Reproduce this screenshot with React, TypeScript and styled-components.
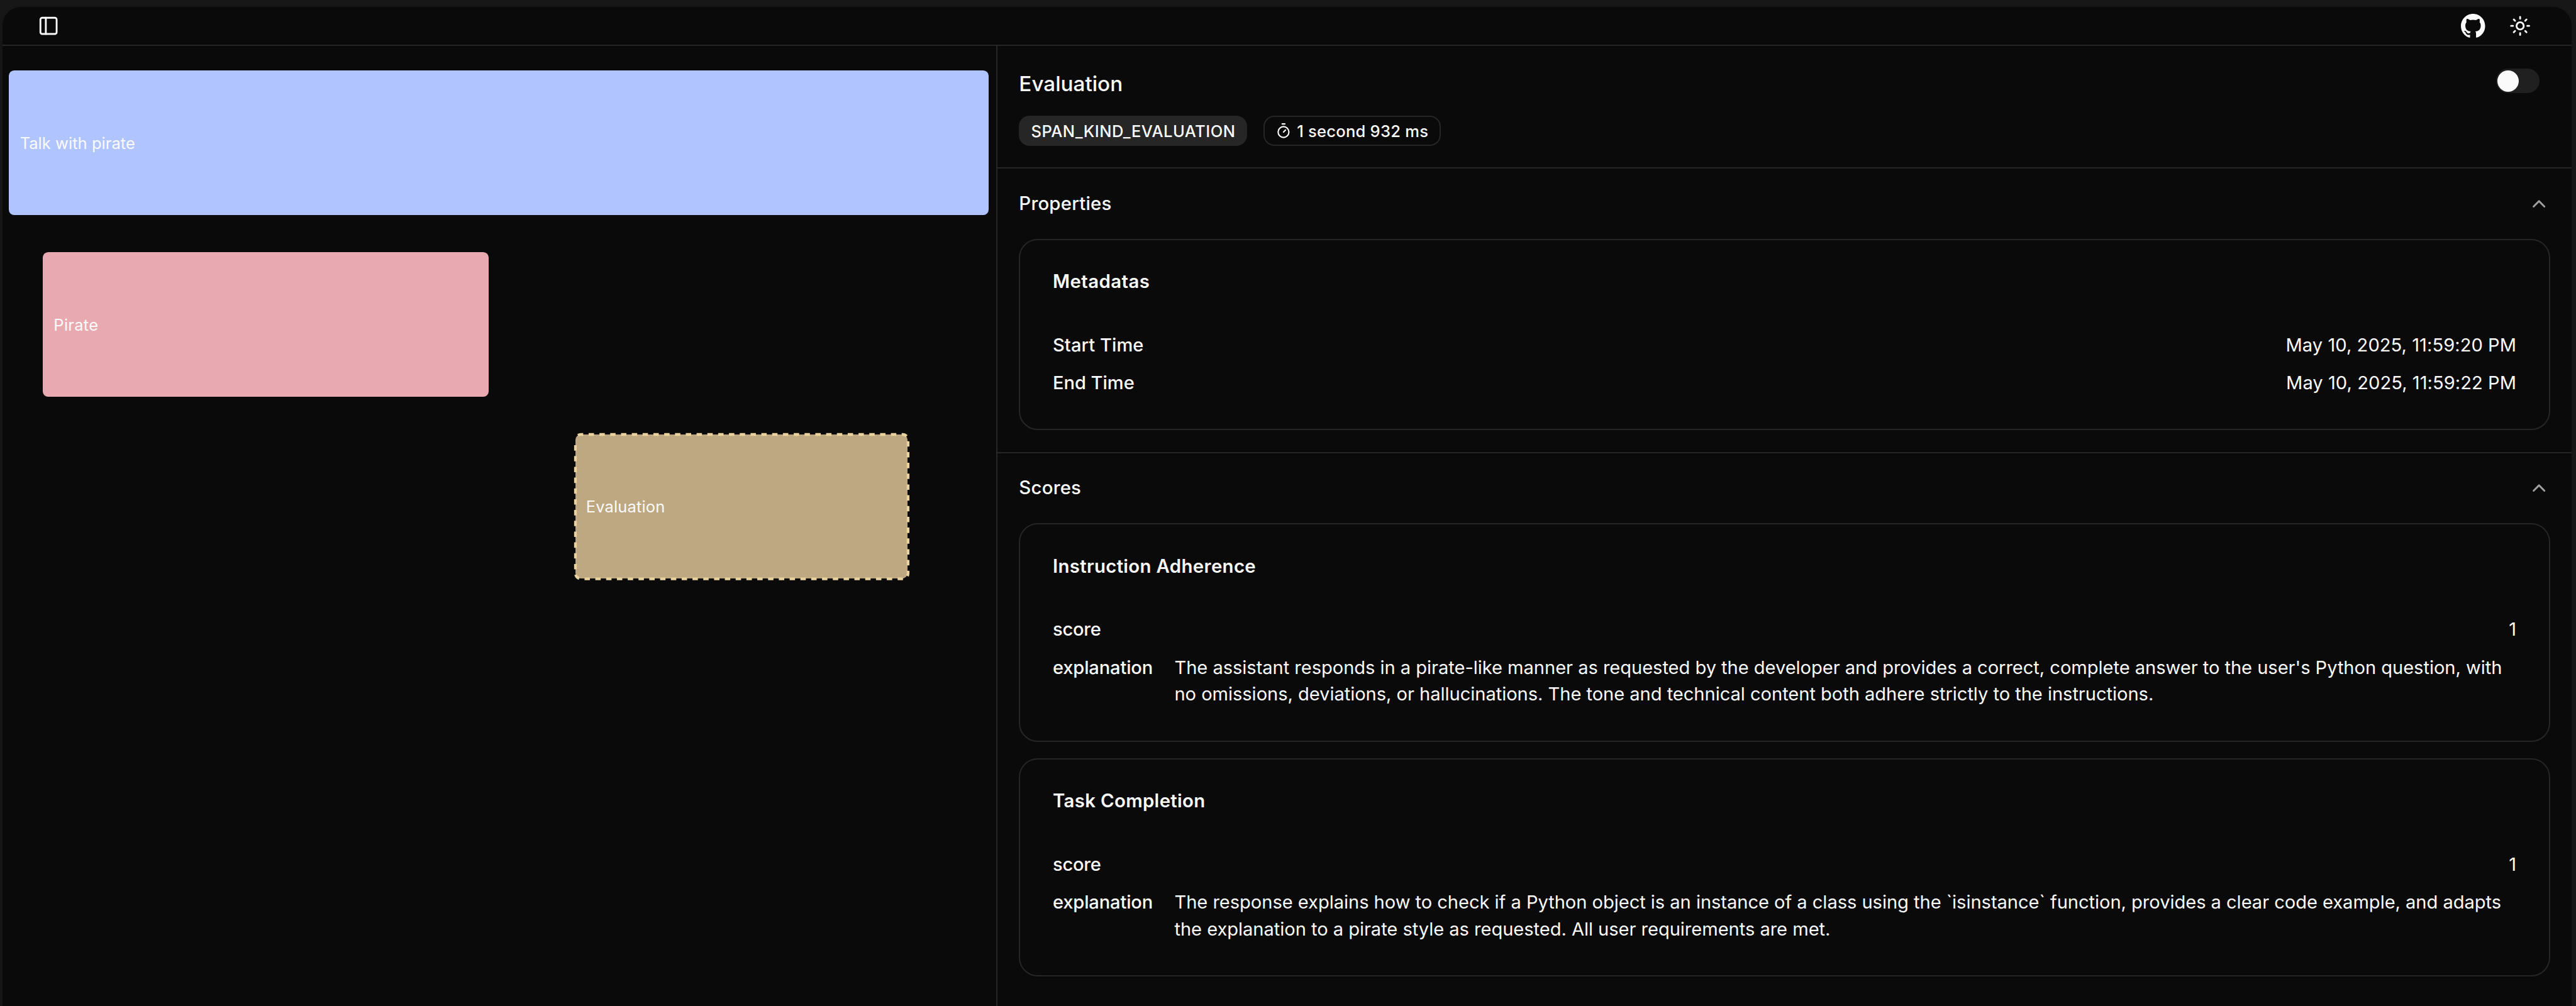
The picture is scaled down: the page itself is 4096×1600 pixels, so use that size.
import React from 'react';
import styled, { createGlobalStyle } from 'styled-components';
import { ChevronUp, PanelLeft, Sun, Timer } from 'lucide-react';

/* One design unit (1 css px of the app at its native zoom) in window pixels. */
const UNIT = (4096 / 7636) * 4;
const px = (n: number) => n * UNIT;
const u = (n: number) => `${px(n).toFixed(3)}px`;
/* Borders always land on two device pixels; paddings next to them make up the rest. */
const LINE = 2;

const color = {
  backdrop: '#171717',
  panel: '#0a0a0a',
  border: '#262626',
  text: '#fafafa',
  muted: '#a1a1a1',
  track: '#202020',
  selection: '#e9d29d',
};

const GlobalStyle = createGlobalStyle`
  *, *::before, *::after { box-sizing: border-box; }
  html, body { margin: 0; background: ${color.backdrop}; }
  body {
    overflow: hidden;
    font-family: Inter, "Liberation Sans", sans-serif;
    color: ${color.text};
    -webkit-font-smoothing: antialiased;
  }
  svg { display: block; flex-shrink: 0; }
`;

const Screen = styled.div`
  height: 100vh;
  padding: ${u(5)} ${u(3.25)} 0 ${u(1.75)};
  overflow: hidden;
  background: ${color.backdrop};
`;

const Panel = styled.main`
  display: flex;
  flex-direction: column;
  height: 110vh;
  border-radius: ${u(14)};
  background: ${color.panel};
  box-shadow: 0 ${u(1)} ${u(3)} rgba(0, 0, 0, 0.1), 0 ${u(1)} ${u(2)} ${u(-1)} rgba(0, 0, 0, 0.1);
`;

const TopBar = styled.header`
  display: flex;
  align-items: center;
  justify-content: space-between;
  flex: none;
  height: ${u(29)};
  padding: 0 ${u(30)} 0 ${u(26)};
  border-bottom: ${LINE}px solid ${color.border};
`;

const Actions = styled.div`
  display: flex;
  align-items: center;
  gap: ${u(18)};
`;

const Body = styled.div`
  display: grid;
  grid-template-columns: ${u(736.5)} 1fr;
  flex: 1;
  min-height: 0;
`;

const Timeline = styled.section`
  display: flex;
  flex-direction: column;
  gap: ${u(27.75)};
  padding: ${u(18.35)} ${u(5.5)} 0 ${u(5)};
`;

const Bar = styled.div<{ $start: number; $length: number; $fill: string; $tracking: number }>`
  position: relative;
  display: flex;
  align-items: center;
  height: ${u(107)};
  width: ${({ $length }) => u($length)};
  margin-left: ${({ $start }) => u($start)};
  padding-left: ${u(8)};
  border-radius: ${u(4)};
  background: ${({ $fill }) => $fill};
  font-size: ${u(11.88)};
  letter-spacing: ${({ $tracking }) => $tracking}px;
  white-space: nowrap;
`;

const SelectionRing = styled.svg`
  position: absolute;
  inset: 0;
  overflow: visible;
`;

const Details = styled.section`
  display: flex;
  flex-direction: column;
  border-left: ${LINE}px solid ${color.border};
`;

const Summary = styled.div`
  display: flex;
  align-items: flex-start;
  justify-content: space-between;
  flex: none;
  height: ${u(91)};
  padding: ${u(16)} ${u(24)} 0 ${u(16)};
  border-bottom: ${LINE}px solid ${color.border};
`;

const SummaryText = styled.div`
  display: flex;
  flex-direction: column;
  gap: ${u(12)};
`;

const Title = styled.h1`
  height: ${u(24)};
  margin: 0;
  padding-top: 1px;
  font-size: ${u(15.504)};
  font-weight: 500;
  line-height: ${u(24)};
`;

const Badges = styled.div`
  display: flex;
  gap: ${u(12)};
`;

const Badge = styled.span<{ $outline?: boolean; $width: number; $tracking: number }>`
  display: flex;
  align-items: center;
  gap: ${u(4)};
  width: ${({ $width }) => u($width)};
  height: ${u(22)};
  padding: 0 0 0 ${u(8)};
  border: ${LINE}px solid ${({ $outline }) => ($outline ? color.border : 'transparent')};
  border-radius: ${u(8)};
  background: ${({ $outline }) => ($outline ? 'transparent' : color.border)};
  background-clip: border-box;
  font-size: ${u(11.88)};
  font-weight: 500;
  letter-spacing: ${({ $tracking }) => $tracking}px;
  white-space: nowrap;
`;

const Toggle = styled.button`
  display: flex;
  align-items: center;
  width: ${u(32)};
  height: ${u(18)};
  margin: ${u(1)} 0 0;
  padding: 0 ${u(1)};
  border: 0;
  border-radius: ${u(9)};
  background: ${color.track};
`;

const Thumb = styled.span`
  width: ${u(16)};
  height: ${u(16)};
  border-radius: 50%;
  background: ${color.text};
`;

const Section = styled.section<{ $last?: boolean }>`
  display: flex;
  flex-direction: column;
  padding: 0 ${u(16)} ${u(16)};
  ${({ $last }) =>
    !$last &&
    `padding-bottom: calc(${u(17)} - ${LINE}px); border-bottom: ${LINE}px solid ${color.border};`}
`;

const Trigger = styled.div`
  display: flex;
  align-items: center;
  justify-content: space-between;
  height: ${u(52)};
  color: ${color.muted};
`;

const Heading = styled.h2`
  margin: 0;
  color: ${color.text};
  font-size: ${u(13.7)};
  font-weight: 500;
  line-height: ${u(20)};
  letter-spacing: 0.21px;
`;

const Cards = styled.div`
  display: flex;
  flex-direction: column;
  gap: ${u(12)};
`;

const CardBox = styled.article`
  display: flex;
  flex-direction: column;
  gap: ${u(30)};
  padding: calc(${u(25)} - ${LINE}px);
  border: ${LINE}px solid ${color.border};
  border-radius: ${u(14)};
  font-size: ${u(13.566)};
`;

const CardTitle = styled.h3<{ $tracking: number }>`
  margin: 0;
  font-size: ${u(13.7)};
  font-weight: 600;
  line-height: ${u(14)};
  letter-spacing: ${({ $tracking }) => $tracking}px;
`;

const Rows = styled.dl`
  display: flex;
  flex-direction: column;
  gap: ${u(8)};
  margin: 0;
  line-height: ${u(20)};
`;

const Row = styled.div`
  display: flex;
  justify-content: space-between;
  gap: ${u(16)};
`;

const Label = styled.dt<{ $tracking: number }>`
  flex: none;
  font-weight: 500;
  letter-spacing: ${({ $tracking }) => $tracking}px;
`;

const Value = styled.dd<{ $tracking: number }>`
  margin: 0;
  letter-spacing: ${({ $tracking }) => $tracking}px;
`;

type Entry = { label: string; value: string; labelTracking: number; valueTracking: number };

function Card({ title, tracking, entries }: { title: string; tracking: number; entries: Entry[] }) {
  return (
    <CardBox>
      <CardTitle $tracking={tracking}>{title}</CardTitle>
      <Rows>
        {entries.map((e) => (
          <Row key={e.label}>
            <Label $tracking={e.labelTracking}>{e.label}</Label>
            <Value $tracking={e.valueTracking}>{e.value}</Value>
          </Row>
        ))}
      </Rows>
    </CardBox>
  );
}

function GithubMark({ size }: { size: number }) {
  return (
    <svg width={size} height={(size * 96) / 98} viewBox="0 0 97.7 95.95" fill={color.text}>
      <path
        fillRule="evenodd"
        clipRule="evenodd"
        d="M48.854 0C21.839 0 0 22 0 49.217c0 21.756 13.993 40.172 33.405 46.69 2.427.49 3.316-1.059 3.316-2.362 0-1.141-.08-5.052-.08-9.127-13.59 2.934-16.42-5.867-16.42-5.867-2.184-5.704-5.42-7.17-5.42-7.17-4.448-3.015.324-3.015.324-3.015 4.934.326 7.523 5.052 7.523 5.052 4.367 7.496 11.404 5.378 14.235 4.074.404-3.178 1.699-5.378 3.074-6.6-10.839-1.141-22.243-5.378-22.243-24.283 0-5.378 1.94-9.778 5.014-13.2-.485-1.222-2.184-6.275.486-13.038 0 0 4.125-1.304 13.426 5.052a46.97 46.97 0 0 1 12.214-1.63c4.125 0 8.33.571 12.213 1.63 9.302-6.356 13.427-5.052 13.427-5.052 2.67 6.763.97 11.816.485 13.038 3.155 3.422 5.015 7.822 5.015 13.2 0 18.905-11.404 23.06-22.324 24.283 1.78 1.548 3.316 4.481 3.316 9.126 0 6.6-.08 11.897-.08 13.526 0 1.304.89 2.853 3.316 2.364 19.412-6.52 33.405-24.935 33.405-46.691C97.707 22 75.788 0 48.854 0z"
      />
    </svg>
  );
}

/* Dashed outline centred on the bar's edge. */
function Selection({ width, height }: { width: number; height: number }) {
  const r = 4;
  const d = `M0 ${r}a${r} ${r} 0 0 1 ${r} ${-r}H${width - r}a${r} ${r} 0 0 1 ${r} ${r}V${height - r}a${r} ${r} 0 0 1 ${-r} ${r}H${r}a${r} ${r} 0 0 1 ${-r} ${-r}Z`;
  return (
    <SelectionRing width={px(width)} height={px(height)} viewBox={`0 0 ${width} ${height}`}>
      <path
        d={d}
        fill="none"
        stroke={color.selection}
        strokeWidth={2}
        strokeDasharray="4 4"
        strokeDashoffset={4}
      />
    </SelectionRing>
  );
}

const spans = [
  { name: 'Talk with pirate', start: 0, length: 726, fill: '#b0c5ff', tracking: 0.05, selected: false },
  { name: 'Pirate', start: 25.05, length: 330.4, fill: '#e8aab0', tracking: 0.27, selected: false },
  { name: 'Evaluation', start: 419.5, length: 246.5, fill: '#bda881', tracking: 0.14, selected: true },
];

const metadata: Entry[] = [
  { label: 'Start Time', value: 'May 10, 2025, 11:59:20 PM', labelTracking: 0.04, valueTracking: 0.05 },
  { label: 'End Time', value: 'May 10, 2025, 11:59:22 PM', labelTracking: -0.04, valueTracking: 0.05 },
];

const scores = [
  {
    title: 'Instruction Adherence',
    tracking: 0.33,
    explanation:
      "The assistant responds in a pirate-like manner as requested by the developer and provides a correct, complete answer to the user's Python question, with no omissions, deviations, or hallucinations. The tone and technical content both adhere strictly to the instructions.",
  },
  {
    title: 'Task Completion',
    tracking: 0.33,
    explanation:
      'The response explains how to check if a Python object is an instance of a class using the `isinstance` function, provides a clear code example, and adapts the explanation to a pirate style as requested. All user requirements are met.',
  },
];

export default function App() {
  return (
    <>
      <GlobalStyle />
      <Screen>
        <Panel>
          <TopBar>
            <PanelLeft size={px(16)} strokeWidth={2} />
            <Actions>
              <GithubMark size={px(18)} />
              <Sun size={px(16)} strokeWidth={2} />
            </Actions>
          </TopBar>
          <Body>
            <Timeline>
              {spans.map((s) => (
                <Bar key={s.name} $start={s.start} $length={s.length} $fill={s.fill} $tracking={s.tracking}>
                  {s.name}
                  {s.selected && <Selection width={s.length} height={107} />}
                </Bar>
              ))}
            </Timeline>
            <Details>
              <Summary>
                <SummaryText>
                  <Title>Evaluation</Title>
                  <Badges>
                    <Badge $width={169} $tracking={0.47}>
                      SPAN_KIND_EVALUATION
                    </Badge>
                    <Badge $outline $width={131.6} $tracking={0.27}>
                      <Timer size={px(12)} strokeWidth={2} />
                      1 second 932 ms
                    </Badge>
                  </Badges>
                </SummaryText>
                <Toggle type="button" role="switch" aria-checked="false">
                  <Thumb />
                </Toggle>
              </Summary>
              <Section>
                <Trigger>
                  <Heading>Properties</Heading>
                  <ChevronUp size={px(16)} strokeWidth={2} />
                </Trigger>
                <Card title="Metadatas" tracking={0.41} entries={metadata} />
              </Section>
              <Section $last>
                <Trigger>
                  <Heading>Scores</Heading>
                  <ChevronUp size={px(16)} strokeWidth={2} />
                </Trigger>
                <Cards>
                  {scores.map((s) => (
                    <Card
                      key={s.title}
                      title={s.title}
                      tracking={s.tracking}
                      entries={[
                        { label: 'score', value: '1', labelTracking: -0.25, valueTracking: 0 },
                        {
                          label: 'explanation',
                          value: s.explanation,
                          labelTracking: -0.155,
                          valueTracking: -0.04,
                        },
                      ]}
                    />
                  ))}
                </Cards>
              </Section>
            </Details>
          </Body>
        </Panel>
      </Screen>
    </>
  );
}
